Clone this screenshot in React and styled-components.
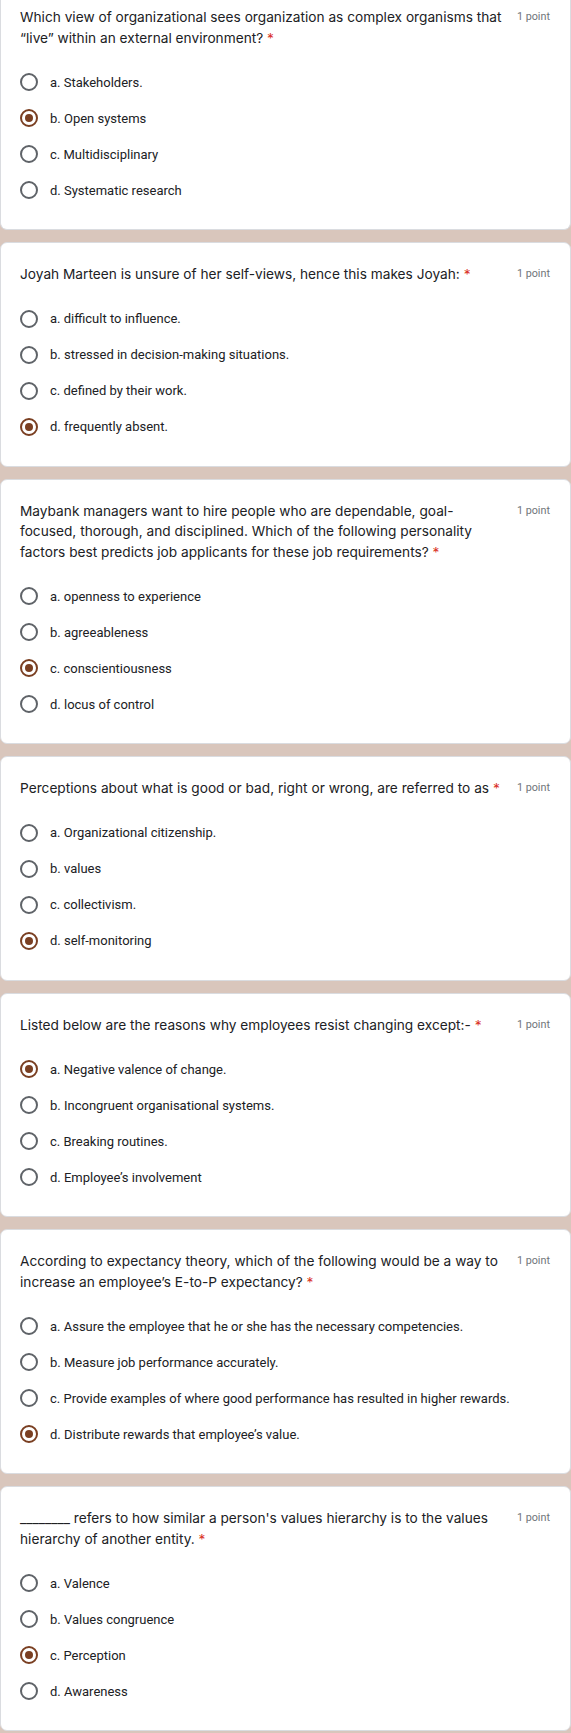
import styled, { createGlobalStyle } from "styled-components";

const GlobalStyle = createGlobalStyle`
  body {
    margin: 0;
    background: #d9c6bc;
    font-family: Roboto, "Liberation Sans", sans-serif;
  }
`;

const Page = styled.main`
  display: flex;
  flex-direction: column;
  gap: 12px;
  background: #d9c6bc;
`;

const Card = styled.section`
  background: #fff;
  border: 1px solid #dadce0;
  border-radius: 7px;
  padding: 21px 20px 21px 19px;

  ${(p) =>
    p.$cut &&
    `
    border-top: none;
    border-radius: 0 0 7px 7px;
    padding-top: 7px;
  `}
`;

const Header = styled.div`
  display: flex;
  align-items: flex-start;
`;

const Title = styled.div`
  flex: 1;
  font-family: Inter, "Noto Sans", sans-serif;
  font-size: 13.7px;
  line-height: 20.5px;
  color: #202124;
`;

const Required = styled.span`
  color: #d93025;
`;

const Points = styled.div`
  margin-left: 12px;
  font-size: 10.8px;
  line-height: 20.5px;
  color: #70757a;
  white-space: nowrap;
`;

const Options = styled.div`
  margin-top: 16px;
  display: flex;
  flex-direction: column;
`;

const Option = styled.label`
  display: flex;
  align-items: center;
  gap: 12px;
  height: 36px;
  font-size: 13px;
  color: #202124;
`;

const Radio = styled.span`
  box-sizing: border-box;
  flex: none;
  width: 18px;
  height: 18px;
  border-radius: 50%;
  border: 2px solid ${(p) => (p.$checked ? "#7a3f22" : "#5f6368")};
  display: flex;
  align-items: center;
  justify-content: center;

  &::after {
    content: "";
    width: 8px;
    height: 8px;
    border-radius: 50%;
    background: ${(p) => (p.$checked ? "#7a3f22" : "transparent")};
  }
`;

const questions = [
  {
    title:
      "Which view of organizational sees organization as complex organisms that \u201clive\u201d within an external environment?",
    options: ["a. Stakeholders.", "b. Open systems", "c. Multidisciplinary", "d. Systematic research"],
    answer: 1,
  },
  {
    title: "Joyah Marteen is unsure of her self-views, hence this makes Joyah:",
    options: [
      "a. difficult to influence.",
      "b. stressed in decision-making situations.",
      "c. defined by their work.",
      "d. frequently absent.",
    ],
    answer: 3,
  },
  {
    title:
      "Maybank managers want to hire people who are dependable, goal-focused, thorough, and disciplined. Which of the following personality factors best predicts job applicants for these job requirements?",
    options: ["a. openness to experience", "b. agreeableness", "c. conscientiousness", "d. locus of control"],
    answer: 2,
  },
  {
    title: "Perceptions about what is good or bad, right or wrong, are referred to as",
    options: ["a. Organizational citizenship.", "b. values", "c. collectivism.", "d. self-monitoring"],
    answer: 3,
  },
  {
    title: "Listed below are the reasons why employees resist changing except:-",
    options: [
      "a. Negative valence of change.",
      "b. Incongruent organisational systems.",
      "c. Breaking routines.",
      "d. Employee\u2019s involvement",
    ],
    answer: 0,
  },
  {
    title:
      "According to expectancy theory, which of the following would be a way to increase an employee\u2019s E-to-P expectancy?",
    options: [
      "a. Assure the employee that he or she has the necessary competencies.",
      "b. Measure job performance accurately.",
      "c. Provide examples of where good performance has resulted in higher rewards.",
      "d. Distribute rewards that employee\u2019s value.",
    ],
    answer: 3,
  },
  {
    title:
      "________ refers to how similar a person's values hierarchy is to the values hierarchy of another entity.",
    options: ["a. Valence", "b. Values congruence", "c. Perception", "d. Awareness"],
    answer: 2,
  },
];

export default function App() {
  return (
    <>
      <GlobalStyle />
      <Page>
        {questions.map((q, i) => (
          <Card key={i} $cut={i === 0}>
            <Header>
              <Title>
                {q.title} <Required>*</Required>
              </Title>
              <Points>1 point</Points>
            </Header>
            <Options>
              {q.options.map((opt, j) => (
                <Option key={j}>
                  <Radio $checked={j === q.answer} />
                  {opt}
                </Option>
              ))}
            </Options>
          </Card>
        ))}
      </Page>
    </>
  );
}
